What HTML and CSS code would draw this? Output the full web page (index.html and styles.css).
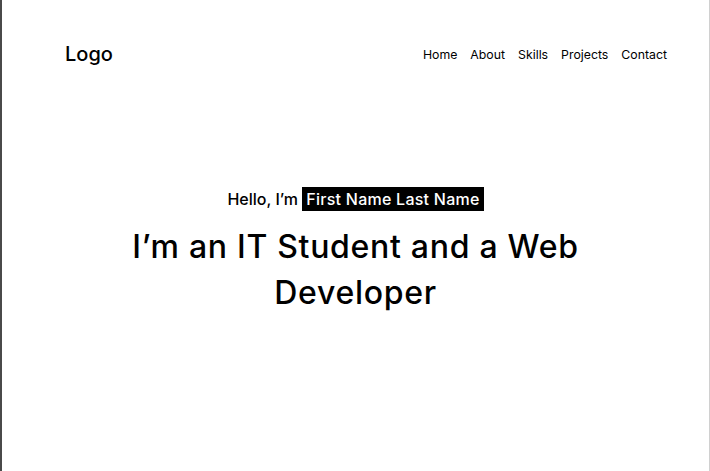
FILE: index.html
```html
<!DOCTYPE html>
<html lang="en">
<head>
<meta charset="utf-8">
<title>Portfolio</title>
<link rel="stylesheet" href="styles.css">
</head>
<body>
<div class="page">
  <header class="header">
    <div class="logo">Logo</div>
    <nav class="nav">
      <a href="#">Home</a>
      <a href="#">About</a>
      <a href="#">Skills</a>
      <a href="#">Projects</a>
      <a href="#">Contact</a>
    </nav>
  </header>
  <section class="hero">
    <p class="hello">Hello, I’m <span class="name">First Name Last Name</span></p>
    <h1 class="title">I’m an IT Student and a Web Developer</h1>
  </section>
</div>
</body>
</html>
```
FILE: styles.css
```css
* { box-sizing: border-box; }
html, body { margin: 0; padding: 0; }
body {
  font-family: Inter, "Open Sans", sans-serif;
  color: #000;
  background: #fff;
}
.page {
  height: 471px;
  border-left: 2px solid #4a4a4a;
  border-right: 1px solid #d0d0d0;
  overflow: hidden;
}
.header {
  display: flex;
  justify-content: space-between;
  align-items: center;
  padding: 42px 42px 0 63px;
  height: 66px;
}
.logo {
  font-size: 20px;
  font-weight: 500;
}
.nav {
  display: flex;
  gap: 13px;
}
.nav a {
  color: #000;
  text-decoration: none;
  font-size: 12.3px;
}
.hero {
  display: flex;
  flex-direction: column;
  align-items: center;
  padding-top: 122px;
}
.hello {
  margin: 0;
  font-size: 16px;
  font-weight: 500;
  line-height: 23px;
}
.name {
  background: #000;
  color: #fff;
  padding: 2px 4px;
  letter-spacing: 0.25px;
}
.title {
  margin: 13px 0 0;
  width: 480px;
  text-align: center;
  font-size: 32px;
  font-weight: 500;
  line-height: 46px;
  letter-spacing: 0.7px;
}
```
